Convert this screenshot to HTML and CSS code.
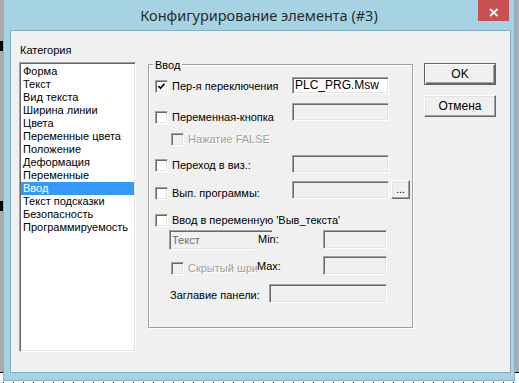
FILE: index.html
```html
<!DOCTYPE html>
<html lang="ru">
<head>
<meta charset="utf-8">
<title>Конфигурирование элемента (#3)</title>
<link rel="stylesheet" href="styles.css">
</head>
<body>
<div class="window">
  <div class="titlebar">
    <span></span>
    <span class="title">Конфигурирование элемента (#3)</span>
    <span class="close"><svg width="31" height="21" viewBox="0 0 31 21"><path d="M12 9 L19.5 16 M19.5 9 L12 16" stroke="#fff" stroke-width="1.8" fill="none"/></svg></span>
  </div>
  <div class="client">
    <div class="col-left">
      <div class="cat-label">Категория</div>
      <ul class="listbox">
        <li>Форма</li>
        <li>Текст</li>
        <li>Вид текста</li>
        <li>Ширина линии</li>
        <li>Цвета</li>
        <li>Переменные цвета</li>
        <li>Положение</li>
        <li>Деформация</li>
        <li>Переменные</li>
        <li class="sel">Ввод</li>
        <li>Текст подсказки</li>
        <li>Безопасность</li>
        <li>Программируемость</li>
      </ul>
    </div>

    <div class="group">
      <span class="legend">Ввод</span>

      <div class="row r1">
        <label class="check"><span class="cb"><svg width="9" height="9" viewBox="0 0 9 9"><path d="M1.5 4 L3.5 6.3 L7.5 1.8" stroke="#000" stroke-width="1.7" fill="none"/></svg></span><span>Пер-я переключения</span></label>
        <span class="edit on">PLC_PRG.Msw</span>
      </div>

      <div class="row r2">
        <label class="check"><span class="cb"></span><span>Переменная-кнопка</span></label>
        <span class="edit"></span>
      </div>

      <div class="row r3">
        <label class="check dis"><span class="cb"></span><span>Нажатие FALSE</span></label>
      </div>

      <div class="row r4">
        <label class="check"><span class="cb"></span><span>Переход в виз.:</span></label>
        <span class="edit"></span>
      </div>

      <div class="row r5">
        <label class="check"><span class="cb"></span><span>Вып. программы:</span></label>
        <span class="edit"></span>
        <span class="dots">...</span>
      </div>

      <div class="row r6">
        <label class="check"><span class="cb"></span><span>Ввод в переменную 'Выв_текста'</span></label>
      </div>

      <div class="row r7">
        <span class="edit textbox">Текст</span>
        <span class="minmax min">Min:</span>
        <span class="edit small"></span>
      </div>

      <div class="row r8">
        <label class="check dis clip"><span class="cb"></span><span class="cliptext">Скрытый шрифт</span></label>
        <span class="minmax max">Max:</span>
        <span class="edit small"></span>
      </div>

      <div class="row r9">
        <span class="cap">Заглавие панели:</span>
        <span class="edit wide"></span>
      </div>
    </div>

    <div class="buttons">
      <div class="btn default">OK</div>
      <div class="btn">Отмена</div>
    </div>
  </div>
</div>
</body>
</html>
```

FILE: styles.css
```css
html, body {
  margin: 0;
  padding: 0;
}
body {
  width: 519px;
  height: 383px;
  overflow: hidden;
  background:
    linear-gradient(#000, #000) 0 41px / 3px 10px no-repeat,
    linear-gradient(#000, #000) 0 201px / 3px 10px no-repeat,
    linear-gradient(#000, #000) 0 372px / 3px 1px no-repeat,
    linear-gradient(#000, #000) 515px 372px / 4px 1px no-repeat,
    repeating-linear-gradient(90deg, #000 0 1px, transparent 1px 10px) 3px 382px / 519px 1px no-repeat,
    linear-gradient(#ababab, #ababab) 0 0 / 519px 372px no-repeat,
    #fff;
  font-family: "Liberation Sans", Arial, sans-serif;
  font-size: 11px;
  color: #000;
}

.window {
  margin-left: 3px;
  width: 512px;
  height: 381px;
  box-sizing: border-box;
  background: #a5d3e3;
  border: 1px solid #86b3c4;
  border-top: none;
  display: flex;
  flex-direction: column;
}

.titlebar {
  height: 30px;
  display: grid;
  grid-template-columns: 1fr auto 1fr;
  align-items: start;
}
.title {
  margin-top: 5px;
  font-family: "Noto Sans", "Open Sans", sans-serif;
  font-size: 14.5px;
  line-height: 20px;
  color: #2b2b2b;
  white-space: nowrap;
}
.close {
  justify-self: end;
  margin-right: 5px;
  width: 31px;
  height: 21px;
  background: #c75050;
  display: block;
}
.close svg { display: block; }

.client {
  margin-left: 6px;
  width: 501px;
  height: 343px;
  box-sizing: border-box;
  border: 1px solid #86aebd;
  background: #f0f0f0;
  display: flex;
  align-items: flex-start;
}

/* left column */
.col-left {
  margin-left: 8px;
  width: 117px;
  display: flex;
  flex-direction: column;
}
.cat-label {
  margin-top: 13px;
  padding-left: 1px;
  line-height: 13px;
}
.listbox {
  list-style: none;
  margin: 5px 0 0 0;
  padding: 2px 0 0 0;
  height: 290px;
  box-sizing: border-box;
  background: #fff;
  border: 1px solid;
  border-color: #a0a0a0 #fff #fff #a0a0a0;
  box-shadow: inset 1px 1px 0 #696969, inset -1px -1px 0 #e3e3e3;
}
.listbox li {
  height: 13px;
  line-height: 13px;
  margin: 0 1px;
  padding-left: 2px;
  white-space: nowrap;
}
.listbox li.sel {
  background: #3399ff;
  color: #fff;
}

/* group box */
.group {
  margin-left: 12px;
  margin-top: 33px;
  width: 265px;
  height: 264px;
  box-sizing: border-box;
  border: 1px solid #a0a0a0;
  box-shadow: inset 1px 1px 0 #fff, 1px 1px 0 #fff;
  padding-left: 6px;
  display: flex;
  flex-direction: column;
  align-items: flex-start;
}
.legend {
  margin-top: -6px;
  margin-left: -2px;
  padding: 0 2px;
  line-height: 13px;
  background: #f0f0f0;
}

.row {
  display: flex;
  align-items: flex-start;
  flex: none;
}
.check {
  display: flex;
  align-items: center;
  gap: 4px;
  height: 13px;
  line-height: 13px;
  white-space: nowrap;
  width: 137px;
  flex: none;
}
.cb {
  width: 13px;
  height: 13px;
  box-sizing: border-box;
  border: 1px solid;
  border-color: #a0a0a0 #fff #fff #a0a0a0;
  box-shadow: inset 1px 1px 0 #696969, inset -1px -1px 0 #e3e3e3;
  background: #fff;
  flex: none;
  display: flex;
  align-items: center;
  justify-content: center;
}
.cb svg { display: block; }
.check.dis { color: #a0a0a0; text-shadow: 1px 1px 0 #fff; }
.check.dis .cb { background: #f0f0f0; }

.edit {
  display: block;
  width: 97px;
  box-sizing: border-box;
  border: 1px solid;
  border-color: #a0a0a0 #fff #fff #a0a0a0;
  box-shadow: inset 1px 1px 0 #696969, inset -1px -1px 0 #e3e3e3;
  background: #f0f0f0;
  padding-left: 2px;
  white-space: nowrap;
  flex: none;
}
.edit.on { background: #fff; }

.r1 { margin-top: 5px; height: 17px; }
.r1 .check { margin-top: 3px; }
.r1 .edit { height: 17px; line-height: 15px; font-size: 12px; }

.r2 { margin-top: 9px; height: 18px; }
.r2 .check { margin-top: 8px; }
.r2 .edit { height: 18px; }

.r3 { margin-top: 12px; height: 13px; }
.r3 .check { margin-left: 16px; }

.r4 { margin-top: 9px; height: 18px; }
.r4 .check { margin-top: 4px; }
.r4 .edit { height: 18px; }

.r5 { margin-top: 7px; height: 19px; }
.r5 .check { margin-top: 7px; }
.r5 .edit { height: 18px; margin-top: 1px; }
.dots {
  margin-left: 2px;
  width: 19px;
  height: 19px;
  box-sizing: border-box;
  border: 1px solid;
  border-color: #fff #696969 #696969 #fff;
  box-shadow: inset -1px -1px 0 #a0a0a0, inset 1px 1px 0 #e3e3e3;
  text-align: center;
  line-height: 17px;
  font-size: 11px;
  flex: none;
}

.r6 { margin-top: 15px; height: 13px; }
.r6 .check { width: auto; }

.r7 { margin-top: 3px; height: 20px; }
.r7 .textbox {
  margin-left: 14px;
  width: 104px;
  height: 20px;
  line-height: 18px;
  padding-left: 2px;
  color: #6d6d6d;
}
.minmax {
  display: block;
  background: #f0f0f0;
  line-height: 13px;
  flex: none;
}
.min {
  margin-left: -18px;
  margin-top: 3px;
  width: 68px;
  height: 20px;
  padding-left: 3px;
  box-sizing: border-box;
}
.r7 .small { height: 19px; }
.edit.small { width: 64px; }

.r8 { margin-top: 6px; height: 19px; }
.r8 .check.clip {
  margin-left: 16px;
  margin-top: 6px;
  width: 86px;
  overflow: hidden;
}
.cliptext {
  display: block;
  width: 69px;
  overflow: hidden;
}
.max {
  margin-top: 4px;
  width: 66px;
}
.r8 .small { height: 19px; }

.r9 { margin-top: 9px; height: 19px; }
.cap {
  margin-left: 15px;
  margin-top: 5px;
  width: 99px;
  line-height: 13px;
  white-space: nowrap;
  flex: none;
}
.edit.wide { width: 118px; height: 19px; }

/* buttons */
.buttons {
  margin-left: 11px;
  margin-top: 32px;
  width: 72px;
  display: flex;
  flex-direction: column;
  gap: 10px;
}
.btn {
  height: 22px;
  box-sizing: border-box;
  border: 1px solid;
  border-color: #fff #696969 #696969 #fff;
  box-shadow: inset -1px -1px 0 #a0a0a0, inset 1px 1px 0 #e3e3e3;
  text-align: center;
  line-height: 20px;
  font-size: 12px;
}
.btn.default {
  border: 1px solid #646464;
  box-shadow: inset 1px 1px 0 #fff, inset -1px -1px 0 #696969, inset -2px -2px 0 #a0a0a0;
}
```
